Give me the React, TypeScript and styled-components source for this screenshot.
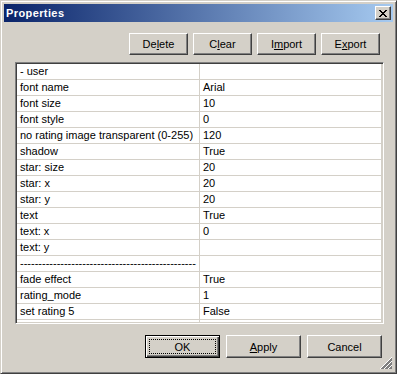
import React from 'react';
import styled, { createGlobalStyle } from 'styled-components';

const GlobalStyle = createGlobalStyle`
  html, body {
    margin: 0;
    padding: 0;
    background: #d4d0c8;
  }
  body {
    font-family: "Liberation Sans", Arial, sans-serif;
    font-size: 11px;
    color: #000;
  }
`;

const Window = styled.div`
  position: relative;
  box-sizing: border-box;
  width: 397px;
  height: 374px;
  padding: 3px;
  display: flex;
  flex-direction: column;
  background: #d4d0c8;
  border: 1px solid;
  border-color: #d4d0c8 #404040 #404040 #d4d0c8;
  box-shadow: inset 1px 1px #fff, inset -1px -1px #808080;
`;

const TitleBar = styled.div`
  height: 18px;
  display: flex;
  align-items: center;
  justify-content: space-between;
  background: linear-gradient(to right, #0a246a, #a6caf0);
`;

const Title = styled.span`
  padding-left: 2px;
  color: #fff;
  font-weight: bold;
  font-size: 11px;
  letter-spacing: 0.4px;
`;

const CloseButton = styled.div`
  box-sizing: border-box;
  width: 16px;
  height: 14px;
  margin-right: 2px;
  display: flex;
  align-items: center;
  justify-content: center;
  background: #d4d0c8;
  border: 1px solid;
  border-color: #fff #404040 #404040 #fff;
  box-shadow: inset -1px -1px #808080;
`;

const Toolbar = styled.div`
  margin-top: 11px;
  padding-right: 13px;
  display: flex;
  justify-content: flex-end;
  gap: 5px;
`;

const Footer = styled.div`
  margin-top: 11px;
  padding-right: 11px;
  display: flex;
  justify-content: flex-end;
  gap: 6px;
`;

const Button = styled.div<{ $w: number; $h: number; $default?: boolean }>`
  position: relative;
  box-sizing: border-box;
  width: ${p => p.$w}px;
  height: ${p => p.$h}px;
  display: flex;
  align-items: center;
  justify-content: center;
  background: #d4d0c8;
  border: 1px solid;
  border-color: ${p => (p.$default ? '#000' : '#fff #404040 #404040 #fff')};
  box-shadow: ${p =>
    p.$default
      ? 'inset 1px 1px #fff, inset -1px -1px #404040, inset -2px -2px #808080'
      : 'inset -1px -1px #808080'};
  u {
    text-decoration: underline;
    text-underline-offset: 1px;
  }
`;

const FocusRing = styled.div`
  position: absolute;
  inset: 3px;
  border: 1px dotted #000;
`;

const Grid = styled.div`
  box-sizing: border-box;
  height: 262px;
  margin: 7px 9px 0 11px;
  background: #fff;
  border: 1px solid;
  border-color: #808080 #fff #fff #808080;
  box-shadow: inset 1px 1px #404040, inset -1px -1px #d4d0c8;
  padding: 1px;
  overflow: hidden;
`;

const Row = styled.div`
  display: flex;
  height: 16px;
  box-sizing: border-box;
  border-bottom: 1px solid #d4d0c8;
`;

const Cell = styled.div<{ $w: number }>`
  box-sizing: border-box;
  width: ${p => p.$w}px;
  padding-left: 3px;
  line-height: 15px;
  white-space: nowrap;
  overflow: hidden;
  border-right: 1px solid #d4d0c8;
`;

const Grip = styled.svg`
  position: absolute;
  right: 4px;
  bottom: 4px;
`;

const rows: [string, string][] = [
  ['- user', ''],
  ['font name', 'Arial'],
  ['font size', '10'],
  ['font style', '0'],
  ['no rating image transparent (0-255)', '120'],
  ['shadow', 'True'],
  ['star: size', '20'],
  ['star: x', '20'],
  ['star: y', '20'],
  ['text', 'True'],
  ['text: x', '0'],
  ['text: y', ''],
  ['-'.repeat(48), ''],
  ['fade effect', 'True'],
  ['rating_mode', '1'],
  ['set rating 5', 'False'],
  ['', ''],
];

const closeGlyph = [
  [0, 0, 2], [6, 0, 2],
  [1, 1, 2], [5, 1, 2],
  [2, 2, 4],
  [3, 3, 2],
  [2, 4, 4],
  [1, 5, 2], [5, 5, 2],
  [0, 6, 2], [6, 6, 2],
];

const CloseIcon = () => (
  <svg width="8" height="7" viewBox="0 0 8 7" shapeRendering="crispEdges">
    {closeGlyph.map(([x, y, w], i) => (
      <rect key={i} x={x} y={y} width={w} height={1} fill="#000" />
    ))}
  </svg>
);

const App: React.FC = () => (
  <>
    <GlobalStyle />
    <Window>
      <TitleBar>
        <Title>Properties</Title>
        <CloseButton>
          <CloseIcon />
        </CloseButton>
      </TitleBar>

      <Toolbar>
        <Button $w={59} $h={22}>De<u>l</u>ete</Button>
        <Button $w={59} $h={22}>C<u>l</u>ear</Button>
        <Button $w={59} $h={22}>I<u>m</u>port</Button>
        <Button $w={59} $h={22}>E<u>x</u>port</Button>
      </Toolbar>

      <Grid>
        {rows.map(([name, value], i) => (
          <Row key={i}>
            <Cell $w={183}>{name}</Cell>
            <Cell $w={182}>{value}</Cell>
          </Row>
        ))}
      </Grid>

      <Footer>
        <Button $w={75} $h={23} $default>
          OK
          <FocusRing />
        </Button>
        <Button $w={75} $h={23}><u>A</u>pply</Button>
        <Button $w={75} $h={23}>Cancel</Button>
      </Footer>

      <Grip width="12" height="12" viewBox="0 0 12 12" shapeRendering="crispEdges">
        {[0, 4, 8].map(o => (
          <g key={o}>
            <line x1={12} y1={o + 0.5} x2={o + 0.5} y2={12} stroke="#fff" />
            <line x1={12} y1={o + 1.5} x2={o + 1.5} y2={12} stroke="#808080" />
            <line x1={12} y1={o + 2.5} x2={o + 2.5} y2={12} stroke="#808080" />
          </g>
        ))}
      </Grip>
    </Window>
  </>
);

export default App;
